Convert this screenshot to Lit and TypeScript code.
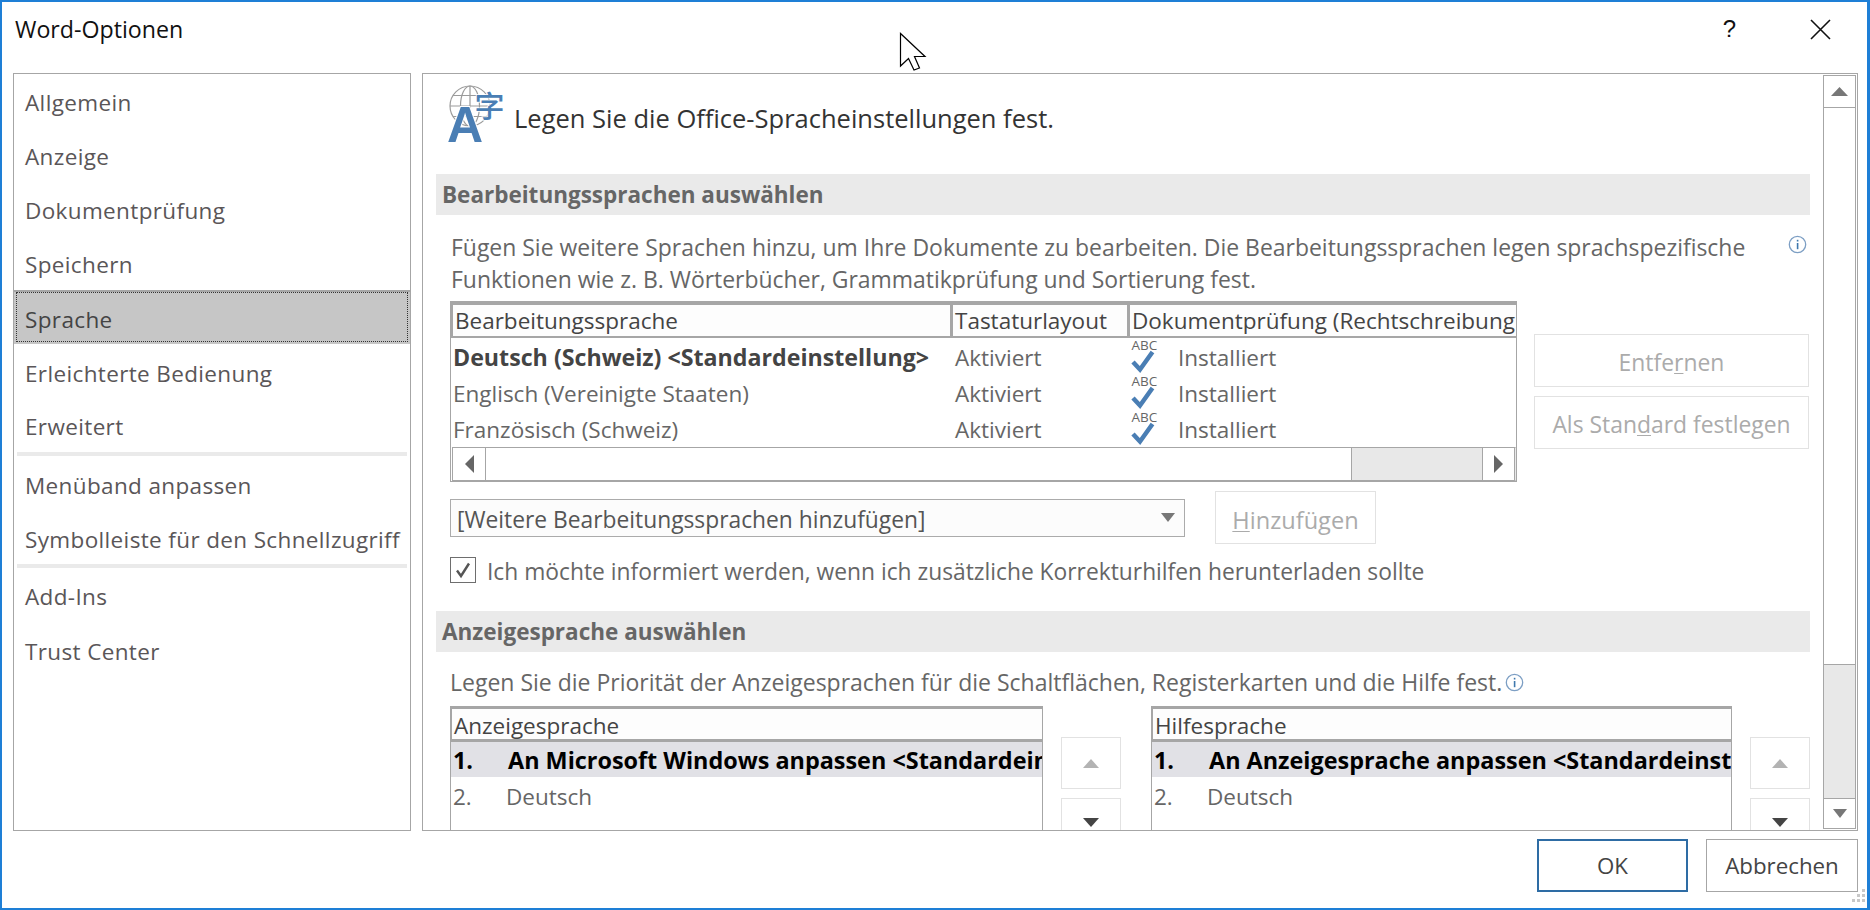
import { LitElement, html, css, svg } from "lit";
import { customElement } from "lit/decorators.js";

const tri = (dir: "up" | "down" | "left" | "right", color: string, w = 18, h = 10) => {
  const pts = {
    up: `0,${h} ${w},${h} ${w / 2},0`,
    down: `0,0 ${w},0 ${w / 2},${h}`,
    left: `${w},0 ${w},${h} 0,${h / 2}`,
    right: `0,0 0,${h} ${w},${h / 2}`,
  }[dir];
  return html`<svg width=${w} height=${h} viewBox="0 0 ${w} ${h}"><polygon points=${pts} fill=${color}></polygon></svg>`;
};

const info = html`<svg class="info" width="19" height="19" viewBox="0 0 19 19">
  <circle cx="9.5" cy="9.5" r="8.2" fill="none" stroke="#7d9fc4" stroke-width="1.3"></circle>
  <rect x="8.8" y="8" width="1.6" height="6.2" fill="#3f78ad"></rect>
  <rect x="8.8" y="4.8" width="1.6" height="1.7" fill="#3f78ad"></rect>
</svg>`;

const spell = html`<svg class="spell" width="30" height="36" viewBox="0 0 30 36">
  <text x="1.5" y="11" class="abc">ABC</text>
  <path d="M3 23 L10 30.5 L22.5 13" fill="none" stroke="#4a7eb4" stroke-width="4.5"></path>
</svg>`;

const langIcon = svg`
  <g fill="none" stroke="#9b9b9b" stroke-width="1.2">
    <circle cx="23" cy="21" r="20"></circle>
    <ellipse cx="23" cy="21" rx="9.5" ry="20"></ellipse>
    <path d="M23 1V41M3 21H43M6 10.5H40M6 31.5H40"></path>
  </g>
  <text x="0" y="57" class="bigA">A</text>
  <text x="27.5" y="31.5" class="zi">字</text>`;

@customElement("app-root")
export class AppRoot extends LitElement {
  static styles = css`
    :host { display: block; width: 1870px; height: 910px; font-family: "Open Sans", "Noto Sans", sans-serif; }
    * { box-sizing: border-box; }
    svg { overflow: visible; }
    u { text-underline-offset: 2px; text-decoration-thickness: 1px; }
    .win { position: relative; width: 1870px; height: 910px; background: #fff; border: solid #1e7fd6; border-width: 2px 3px 2px 2px; display: flex; flex-direction: column; overflow: hidden; }
    .title { height: 71px; flex: none; display: flex; align-items: center; padding: 0 36px 17px 13px; }
    .title .name { flex: 1; font-size: 23.2px; color: #111; }
    .title .help { font-size: 24px; color: #111; margin-right: 74px; font-family: "Liberation Sans", sans-serif; }
    .body { flex: none; height: 758px; display: flex; gap: 11px; padding: 0 9px 0 11px; }
    .nav { width: 398px; flex: none; border: 1px solid #a6a6a6; padding-top: 1px; }
    .nav .item { height: 54px; display: flex; align-items: center; padding-left: 11px; font-size: 22.5px; color: #5a5658; letter-spacing: .36px; white-space: nowrap; }
    .nav .item.sel { background: #c6c6c6; color: #444; outline: 1px dotted #333; outline-offset: -3px; border-top: 2px solid #a6a6a6; margin: -1px 0 2px; padding-top: 2px; }
    .nav .item.h52 { height: 52px; }
    .nav .item.h58 { height: 58px; }
    .nav .item.h50 { height: 50px; }
    .nav .item.h56 { height: 56px; }
    .nav .rule { height: 4px; margin: 0 3px; background: #eaeaea; }
    .panel { flex: 1; min-width: 0; border: 1px solid #a6a6a6; display: flex; overflow: hidden; }
    .content { flex: 1; min-width: 0; overflow: hidden; }
    .head { display: flex; align-items: flex-end; height: 57px; margin: 12px 0 0 24px; gap: 9px; }
    .head span { font-size: 25.5px; color: #333; margin-bottom: 7px; line-height: 36px; }
    .bigA { font: bold 50px "Liberation Sans", sans-serif; fill: #4a7eb4; stroke: #fff; stroke-width: 2px; paint-order: stroke; }
    .zi { font: 500 30px "Noto Sans CJK SC", sans-serif; fill: #4a7eb4; stroke: #fff; stroke-width: 1.5px; paint-order: stroke; }
    .sec { height: 41px; margin: 0 13px; background: #eaeaea; color: #666; font-weight: 700; font-size: 22.5px; line-height: 41px; padding-left: 6px; }
    .sec.a { margin-top: 31px; }
    .sec.b { margin-top: 28px; }
    .para { font-size: 22.95px; line-height: 32px; color: #666; }
    .para.a { position: relative; margin: 16px 50px 0 28px; white-space: nowrap; }
    .para.a .info { position: absolute; left: 1337px; top: 4px; }
    .para.b { margin: 14px 0 0 27px; display: flex; align-items: center; gap: 3px; white-space: nowrap; font-size: 23px; }
    .table { width: 1067px; height: 181px; margin: 6px 0 0 27px; border: 1px solid #a6a6a6; display: flex; flex-direction: column; font-size: 22.5px; color: #666; overflow: hidden; }
    .thead { height: 36px; flex: none; display: grid; grid-template-columns: 500px 177px 1fr; background: #fdfdfd; border-top: 3px solid #a6a6a6; border-bottom: 2px solid #a6a6a6; border-left: 2px solid #a6a6a6; color: #444; }
    .thead div { padding: 0 0 0 2px; line-height: 31px; white-space: nowrap; overflow: hidden; border-right: 3px solid #a6a6a6; }
    .thead div:last-child { border-right: none; }
    .rows { flex: 1; padding-top: 1px; }
    .row { height: 36px; display: grid; grid-template-columns: 500px 177px 1fr; padding-left: 2px; align-items: center; white-space: nowrap; }
    .row > div { padding-left: 2px; overflow: hidden; }
    .row > div:first-child { padding-left: 0; }
    .row b { color: #444; font-size: 23.2px; }
    .row .st { display: flex; align-items: center; gap: 18px; padding-left: 0; }
    .hbar { height: 34px; flex: none; display: flex; margin: 0 0 1px 1px; background: #e8e8e8; border: 1px solid #a6a6a6; border-right: 1px solid #e8e8e8; border-top: 1px solid #a6a6a6; }
    .hbtn { width: 33px; flex: none; display: flex; align-items: center; justify-content: center; background: #fff; border-right: 1px solid #a6a6a6; }
    .hbtn.r { border-left: 1px solid #a6a6a6; border-right: 1px solid #a6a6a6; margin-left: auto; }
    .hthumb { width: 866px; background: #fff; border-right: 1px solid #a6a6a6; }
    .tablewrap { display: flex; }
    .side { display: flex; flex-direction: column; gap: 9px; margin: 39px 0 0 17px; }
    .btn { display: flex; align-items: center; justify-content: center; background: #fff; border: 1px solid #e2e2e2; color: #ababab; font-size: 22.9px; white-space: nowrap; padding-top: 3px; }
    .side .btn { width: 275px; height: 53px; }
    .addrow { display: flex; align-items: center; gap: 30px; margin: 9px 0 0 27px; height: 53px; }
    .select { width: 735px; height: 38px; background: #fcfcfc; border: 1px solid #ababab; display: flex; align-items: center; justify-content: space-between; padding: 4px 9px 0 6px; font-size: 22.8px; color: #555; }
    .select svg { margin-top: -4px; }
    .add { width: 161px; height: 53px; font-size: 23.6px; padding-top: 5px; }
    .check { display: flex; align-items: center; gap: 11px; margin: 13px 0 0 27px; height: 26px; font-size: 22.8px; color: #666; white-space: nowrap; }
    .check span { padding-top: 3px; }
    .box { width: 26px; height: 26px; border: 1px solid #6e6e6e; display: flex; align-items: center; justify-content: center; background: #fff; }
    .lists { display: flex; margin: 8px 0 0 27px; height: 200px; }
    .lst { border-left: 1px solid #a6a6a6; border-right: 1px solid #a6a6a6; font-size: 22.5px; color: #666; overflow: hidden; white-space: nowrap; }
    .lst.l { width: 593px; }
    .lst.r { width: 581px; margin-left: 30px; }
    .lhead { height: 36px; background: #fdfdfd; border-top: 3px solid #a6a6a6; border-bottom: 3px solid #a6a6a6; border-left: 1px solid #a6a6a6; padding-left: 2px; line-height: 33px; color: #444; }
    .lrow { height: 35px; display: flex; align-items: center; padding-left: 2px; }
    .lrow.on { background: #e1e1e6; color: #000; font-weight: 700; font-size: 23.4px; }
    .lrow .n { flex: none; width: 55px; }
    .lrow.plain { height: 38px; }
    .lrow.plain .n { width: 53px; }
    .updown { flex: none; width: 60px; margin: 31px 0 0 18px; display: flex; flex-direction: column; gap: 9px; }
    .updown .btn { width: 60px; height: 52px; padding-top: 0; }
    .updown .btn.dn { height: 52px; align-items: flex-start; padding-top: 19px; }
    .vbar { flex: none; width: 33px; margin: 1px 1px 1px 0; background: #e8e8e8; border-left: 1px solid #a6a6a6; border-right: 1px solid #a6a6a6; display: flex; flex-direction: column; }
    .vb { flex: none; height: 33px; background: #fff; border: 1px solid #a6a6a6; border-width: 1px 0; display: flex; align-items: center; justify-content: center; }
    .vthumb { flex: none; height: 557px; background: #fff; border-bottom: 1px solid #a6a6a6; }
    .vb.d { margin-top: auto; border-bottom: 1px solid #a6a6a6; height: 31px; }
    .foot { flex: none; display: flex; justify-content: flex-end; gap: 18px; padding: 8px 9px 0 0; }
    .fbtn { width: 152px; height: 53px; display: flex; align-items: center; justify-content: center; background: #fff; border: 1px solid #a6a6a6; font-size: 22.3px; color: #444; }
    .fbtn.ok { width: 151px; border: 2px solid #2e6ca4; }
    .cursor { position: absolute; left: 896px; top: 29px; }
    .grip { position: absolute; right: 1px; bottom: 1px; }
    .abc { font: 13.5px "Open Sans", sans-serif; fill: #666; }
  `;

  private nav(label: string, cls = "") {
    return html`<div class="item ${cls}">${label}</div>`;
  }

  render() {
    return html`<div class="win">
      <div class="title">
        <div class="name">Word-Optionen</div>
        <div class="help">?</div>
        <svg width="21" height="21" viewBox="0 0 21 21"><path d="M1 1L20 20M20 1L1 20" stroke="#111" stroke-width="1.6" fill="none"></path></svg>
      </div>
      <div class="body">
        <div class="nav">
          ${this.nav("Allgemein")}${this.nav("Anzeige")}${this.nav("Dokumentprüfung")}${this.nav("Speichern")}
          ${this.nav("Sprache", "sel")}${this.nav("Erleichterte Bedienung")}${this.nav("Erweitert", "h52")}
          <div class="rule"></div>
          ${this.nav("Menüband anpassen", "h58")}${this.nav("Symbolleiste für den Schnellzugriff", "h50")}
          <div class="rule"></div>
          ${this.nav("Add-Ins", "h56")}${this.nav("Trust Center")}
        </div>
        <div class="panel">
          <div class="content">
            <div class="head">
              <svg width="58" height="58" viewBox="0 0 58 58">${langIcon}</svg>
              <span>Legen Sie die Office-Spracheinstellungen fest.</span>
            </div>
            <div class="sec a">Bearbeitungssprachen auswählen</div>
            <div class="para a">Fügen Sie weitere Sprachen hinzu, um Ihre Dokumente zu bearbeiten. Die Bearbeitungssprachen legen sprachspezifische<br />Funktionen wie z. B. Wörterbücher, Grammatikprüfung und Sortierung fest.${info}</div>
            <div class="tablewrap">
              <div class="table">
                <div class="thead"><div>Bearbeitungssprache</div><div>Tastaturlayout</div><div>Dokumentprüfung (Rechtschreibung</div></div>
                <div class="rows">
                  <div class="row"><div><b>Deutsch (Schweiz) &lt;Standardeinstellung&gt;</b></div><div>Aktiviert</div><div class="st">${spell}<span>Installiert</span></div></div>
                  <div class="row"><div>Englisch (Vereinigte Staaten)</div><div>Aktiviert</div><div class="st">${spell}<span>Installiert</span></div></div>
                  <div class="row"><div>Französisch (Schweiz)</div><div>Aktiviert</div><div class="st">${spell}<span>Installiert</span></div></div>
                </div>
                <div class="hbar">
                  <div class="hbtn">${tri("left", "#666", 9, 18)}</div>
                  <div class="hthumb"></div>
                  <div class="hbtn r">${tri("right", "#666", 9, 18)}</div>
                </div>
              </div>
              <div class="side">
                <div class="btn">Entfe<u>r</u>nen</div>
                <div class="btn">Als Stan<u>d</u>ard festlegen</div>
              </div>
            </div>
            <div class="addrow">
              <div class="select"><span>[Weitere Bearbeitungssprachen hinzufügen]</span>${tri("down", "#777", 14, 9)}</div>
              <div class="btn add"><span><u>H</u>inzufügen</span></div>
            </div>
            <div class="check">
              <div class="box"><svg width="18" height="18" viewBox="0 0 18 18"><path d="M3 9.5L7 15L15 2.5" fill="none" stroke="#555" stroke-width="2.4"></path></svg></div>
              <span>Ich möchte informiert werden, wenn ich zusätzliche Korrekturhilfen herunterladen sollte</span>
            </div>
            <div class="sec b">Anzeigesprache auswählen</div>
            <div class="para b">Legen Sie die Priorität der Anzeigesprachen für die Schaltflächen, Registerkarten und die Hilfe fest.${info}</div>
            <div class="lists">
              <div class="lst l">
                <div class="lhead">Anzeigesprache</div>
                <div class="lrow on"><span class="n">1.</span><span>An Microsoft Windows anpassen &lt;Standardeinstellung&gt;</span></div>
                <div class="lrow plain"><span class="n">2.</span><span>Deutsch</span></div>
              </div>
              <div class="updown">
                <div class="btn">${tri("up", "#b3b3b3", 16, 9)}</div>
                <div class="btn dn">${tri("down", "#444", 16, 9)}</div>
              </div>
              <div class="lst r">
                <div class="lhead">Hilfesprache</div>
                <div class="lrow on"><span class="n">1.</span><span>An Anzeigesprache anpassen &lt;Standardeinstellung&gt;</span></div>
                <div class="lrow plain"><span class="n">2.</span><span>Deutsch</span></div>
              </div>
              <div class="updown">
                <div class="btn">${tri("up", "#b3b3b3", 16, 9)}</div>
                <div class="btn dn">${tri("down", "#444", 16, 9)}</div>
              </div>
            </div>
          </div>
          <div class="vbar">
            <div class="vb">${tri("up", "#777", 17, 9)}</div>
            <div class="vthumb"></div>
            <div class="vb d">${tri("down", "#777", 14, 9)}</div>
          </div>
        </div>
      </div>
      <div class="foot">
        <div class="fbtn ok">OK</div>
        <div class="fbtn">Abbrechen</div>
      </div>
      <svg class="cursor" width="30" height="42" viewBox="0 0 30 42">
        <path d="M2.5 2.5V35L10.5 27.5L16 39L21.5 37L16.5 25.5H27Z" fill="#fff" stroke="#000" stroke-width="1.2"></path>
      </svg>
      <svg class="grip" width="14" height="18" viewBox="0 0 14 18" fill="#c8c8c8">
        <rect x="10" y="0" width="3" height="3"></rect>
        <rect x="10" y="5" width="3" height="3"></rect><rect x="5" y="5" width="3" height="3"></rect>
        <rect x="10" y="10" width="3" height="3"></rect><rect x="5" y="10" width="3" height="3"></rect><rect x="0" y="10" width="3" height="3"></rect>
      </svg>
    </div>`;
  }
}
